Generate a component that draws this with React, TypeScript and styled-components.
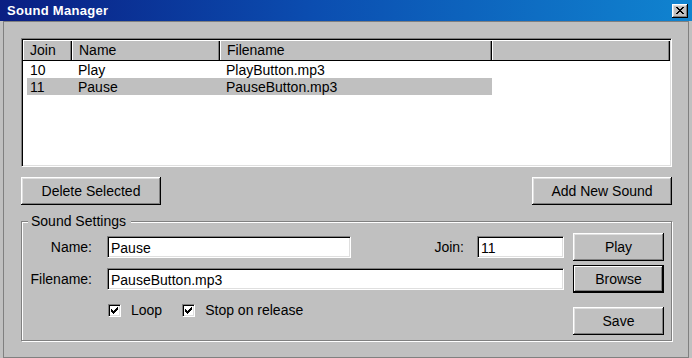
import styled, { createGlobalStyle } from "styled-components";

const GlobalStyle = createGlobalStyle`
  html, body {
    margin: 0;
    padding: 0;
    background: #c0c0c0;
  }
  body {
    font-family: "Liberation Sans", Arial, sans-serif;
    font-size: 14px;
    color: #000;
  }
`;

const Window = styled.div`
  width: 692px;
  height: 358px;
  background: #c0c0c0;
  display: flex;
  flex-direction: column;
  box-sizing: border-box;
`;

const TitleBar = styled.div`
  height: 21px;
  flex: none;
  display: flex;
  align-items: center;
  justify-content: space-between;
  padding: 0 4px 0 7px;
  background: linear-gradient(90deg, #0a1e82 0%, #0b4db0 45%, #1084d0 100%);
`;

const Title = styled.span`
  color: #fff;
  font-weight: bold;
  font-size: 13px;
  letter-spacing: 0.3px;
`;

const CloseButton = styled.button`
  width: 16px;
  height: 14px;
  padding: 0;
  margin: 0;
  display: flex;
  align-items: center;
  justify-content: center;
  background: #c0c0c0;
  border: none;
  box-shadow: inset -1px -1px 0 #000, inset 1px 1px 0 #fff,
    inset -2px -2px 0 #808080, inset 2px 2px 0 #dfdfdf;
`;

const Client = styled.div`
  flex: 1;
  margin: 0 3px 0 3px;
  border: 1px solid #808080;
  padding: 16px 16px 0 17px;
  display: flex;
  flex-direction: column;
`;

const ListView = styled.div`
  height: 129px;
  box-sizing: border-box;
  background: #fff;
  border-top: 1px solid #808080;
  border-left: 1px solid #808080;
  border-right: 1px solid #fff;
  border-bottom: 1px solid #fff;
  box-shadow: inset 1px 1px 0 #000, inset -1px -1px 0 #dfdfdf;
  padding: 1px 1px 0 1px;
  overflow: hidden;
`;

const HeaderRow = styled.div`
  display: flex;
  height: 20px;
  border-bottom: 1px solid #000;
`;

const HeaderCell = styled.div<{ $w?: number }>`
  ${(p) => (p.$w ? `width: ${p.$w}px; flex: none;` : "flex: 1;")}
  box-sizing: border-box;
  background: #c0c0c0;
  padding-left: 7px;
  display: flex;
  align-items: center;
  box-shadow: inset 1px 1px 0 #fff, inset -1px 0 0 #000, inset -2px 0 0 #808080;
`;

const Row = styled.div<{ $selected?: boolean }>`
  display: flex;
  height: 17px;
  align-items: center;
  margin-left: 4px;
  width: 465px;
  background: ${(p) => (p.$selected ? "#c0c0c0" : "transparent")};
`;

const Cell = styled.div<{ $w: number; $pad: number }>`
  width: ${(p) => p.$w}px;
  flex: none;
  box-sizing: border-box;
  padding-left: ${(p) => p.$pad}px;
  white-space: nowrap;
`;

const ButtonRow = styled.div`
  display: flex;
  justify-content: space-between;
  margin-top: 10px;
`;

const Button = styled.button<{ $w: number; $default?: boolean }>`
  width: ${(p) => p.$w}px;
  height: 28px;
  flex: none;
  font-family: "Liberation Sans", Arial, sans-serif;
  font-size: 14px;
  color: #000;
  background: #c0c0c0;
  border: none;
  padding: 0;
  margin: 0;
  box-shadow: ${(p) =>
    p.$default
      ? "inset 0 0 0 1px #000, inset -2px -2px 0 #000, inset 2px 2px 0 #fff, inset -3px -3px 0 #808080"
      : "inset -1px -1px 0 #000, inset 1px 1px 0 #fff, inset -2px -2px 0 #808080, inset 2px 2px 0 #dfdfdf"};
`;

const GroupBox = styled.fieldset`
  margin: 8px 0 0 0;
  padding: 4px 7px 5px 0;
  min-width: 0;
  border: 1px solid #808080;
  box-shadow: 1px 1px 0 #fff, inset 1px 1px 0 #fff;
  display: flex;
  flex-direction: column;
`;

const Legend = styled.legend`
  margin-left: 6px;
  padding: 0 5px 0 3px;
  background: #c0c0c0;
  line-height: 16px;
`;

const FormRow = styled.div<{ $mt?: number }>`
  display: flex;
  align-items: center;
  height: 28px;
  margin-top: ${(p) => p.$mt ?? 0}px;
`;

const Label = styled.label<{ $w?: number; $mr: number }>`
  ${(p) => (p.$w ? `width: ${p.$w}px;` : "")}
  flex: none;
  text-align: right;
  margin-right: ${(p) => p.$mr}px;
`;

const TextInput = styled.input<{ $w?: number }>`
  ${(p) => (p.$w ? `width: ${p.$w}px; flex: none;` : "flex: 1; min-width: 0;")}
  height: 22px;
  box-sizing: border-box;
  margin: 0;
  padding: 1px 3px 0 3px;
  font-family: "Liberation Sans", Arial, sans-serif;
  font-size: 14px;
  color: #000;
  background: #fff;
  outline: none;
  border-top: 1px solid #808080;
  border-left: 1px solid #808080;
  border-right: 1px solid #fff;
  border-bottom: 1px solid #fff;
  box-shadow: inset 1px 1px 0 #000, inset -1px -1px 0 #dfdfdf;
`;

const Spacer = styled.div`
  flex: 1;
`;

const OptionsRow = styled.div`
  display: flex;
  align-items: flex-start;
  margin-top: 10px;
`;

const Checks = styled.div`
  display: flex;
  align-items: center;
  gap: 20px;
  margin-left: 86px;
  height: 14px;
`;

const CheckItem = styled.label`
  display: flex;
  align-items: center;
  gap: 10px;
`;

const CheckBox = styled.span`
  width: 13px;
  height: 13px;
  box-sizing: border-box;
  background: #fff;
  border-top: 1px solid #808080;
  border-left: 1px solid #808080;
  border-right: 1px solid #fff;
  border-bottom: 1px solid #fff;
  box-shadow: inset 1px 1px 0 #000, inset -1px -1px 0 #dfdfdf;
  display: flex;
  align-items: center;
  justify-content: center;
`;

const SaveWrap = styled.div`
  margin-top: 4px;
`;

function CheckMark() {
  return (
    <svg width="7" height="7" viewBox="0 0 7 7" shapeRendering="crispEdges">
      <path
        d="M0 2h1v3h-1zM1 3h1v3h-1zM2 4h1v3h-1zM3 3h1v3h-1zM4 2h1v3h-1zM5 1h1v3h-1zM6 0h1v3h-1z"
        fill="#000"
      />
    </svg>
  );
}

function CloseGlyph() {
  return (
    <svg width="8" height="7" viewBox="0 0 8 7" shapeRendering="crispEdges">
      <path
        d="M0 0h2v1h-2zM6 0h2v1h-2zM1 1h2v1h-2zM5 1h2v1h-2zM2 2h4v1h-4zM3 3h2v1h-2zM2 4h4v1h-4zM1 5h2v1h-2zM5 5h2v1h-2zM0 6h2v1h-2zM6 6h2v1h-2z"
        fill="#000"
      />
    </svg>
  );
}

const sounds = [
  { join: "10", name: "Play", file: "PlayButton.mp3" },
  { join: "11", name: "Pause", file: "PauseButton.mp3" },
];

export default function App() {
  return (
    <>
      <GlobalStyle />
      <Window>
        <TitleBar>
          <Title>Sound Manager</Title>
          <CloseButton aria-label="Close">
            <CloseGlyph />
          </CloseButton>
        </TitleBar>
        <Client>
          <ListView>
            <HeaderRow>
              <HeaderCell $w={49}>Join</HeaderCell>
              <HeaderCell $w={148}>Name</HeaderCell>
              <HeaderCell $w={272}>Filename</HeaderCell>
              <HeaderCell />
            </HeaderRow>
            {sounds.map((s) => (
              <Row key={s.join} $selected={s.name === "Pause"}>
                <Cell $w={45} $pad={3}>
                  {s.join}
                </Cell>
                <Cell $w={148} $pad={6}>
                  {s.name}
                </Cell>
                <Cell $w={272} $pad={6}>
                  {s.file}
                </Cell>
              </Row>
            ))}
          </ListView>
          <ButtonRow>
            <Button $w={140}>Delete Selected</Button>
            <Button $w={140}>Add New Sound</Button>
          </ButtonRow>
          <GroupBox>
            <Legend>Sound Settings</Legend>
            <FormRow>
              <Label $w={70} $mr={15}>
                Name:
              </Label>
              <TextInput $w={244} defaultValue="Pause" />
              <Spacer />
              <Label $mr={13}>Join:</Label>
              <TextInput $w={87} defaultValue="11" />
              <Button $w={91} style={{ marginLeft: 9 }}>
                Play
              </Button>
            </FormRow>
            <FormRow $mt={4}>
              <Label $w={70} $mr={15}>
                Filename:
              </Label>
              <TextInput defaultValue="PauseButton.mp3" />
              <Button $w={91} $default style={{ marginLeft: 9 }}>
                Browse
              </Button>
            </FormRow>
            <OptionsRow>
              <Checks>
                <CheckItem>
                  <CheckBox>
                    <CheckMark />
                  </CheckBox>
                  Loop
                </CheckItem>
                <CheckItem>
                  <CheckBox>
                    <CheckMark />
                  </CheckBox>
                  Stop on release
                </CheckItem>
              </Checks>
              <Spacer />
              <SaveWrap>
                <Button $w={91}>Save</Button>
              </SaveWrap>
            </OptionsRow>
          </GroupBox>
        </Client>
      </Window>
    </>
  );
}
